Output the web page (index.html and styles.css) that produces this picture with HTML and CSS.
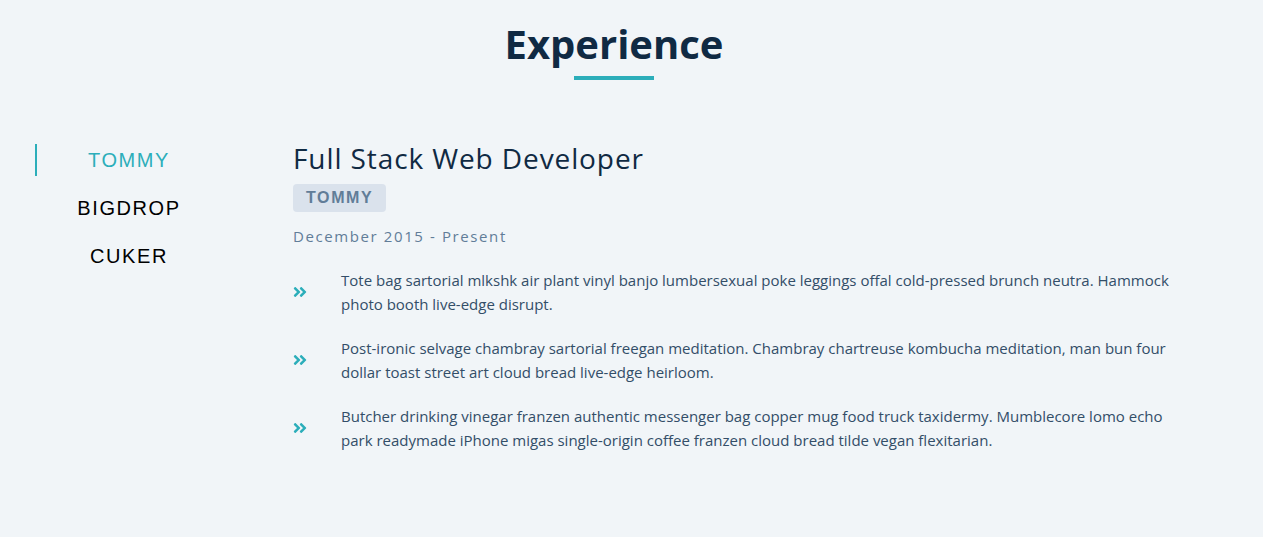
FILE: index.html
```html
<!DOCTYPE html>
<html lang="en">
<head>
<meta charset="utf-8">
<title>Experience</title>
<link rel="stylesheet" href="styles.css">
</head>
<body>
<section class="section">
  <div class="title">
    <h2>Experience</h2>
    <div class="underline"></div>
  </div>
  <div class="jobs-center">
    <div class="btn-container">
      <button class="job-btn active-btn">Tommy</button>
      <button class="job-btn">Bigdrop</button>
      <button class="job-btn">Cuker</button>
    </div>
    <article class="job-info">
      <h3>Full Stack Web Developer</h3>
      <h4>Tommy</h4>
      <p class="job-date">December 2015 - Present</p>
      <div class="job-desc">
        <svg class="job-icon" viewBox="0 0 448 512" aria-hidden="true"><path d="M224.3 273l-136 136c-9.4 9.4-24.6 9.4-33.9 0l-22.6-22.6c-9.4-9.4-9.4-24.6 0-33.9l96.4-96.4-96.4-96.4c-9.4-9.4-9.4-24.6 0-33.9L54.3 103c9.4-9.4 24.6-9.4 33.9 0l136 136c9.5 9.4 9.5 24.6.1 34zm192-34l-136-136c-9.4-9.4-24.6-9.4-33.9 0l-22.6 22.6c-9.4 9.4-9.4 24.6 0 33.9l96.4 96.4-96.4 96.4c-9.4 9.4-9.4 24.6 0 33.9l22.6 22.6c9.4 9.4 24.6 9.4 33.9 0l136-136c9.4-9.2 9.4-24.4 0-33.8z"/></svg>
        <p>Tote bag sartorial mlkshk air plant vinyl banjo lumbersexual poke leggings offal cold-pressed brunch neutra. Hammock photo booth live-edge disrupt.</p>
      </div>
      <div class="job-desc">
        <svg class="job-icon" viewBox="0 0 448 512" aria-hidden="true"><path d="M224.3 273l-136 136c-9.4 9.4-24.6 9.4-33.9 0l-22.6-22.6c-9.4-9.4-9.4-24.6 0-33.9l96.4-96.4-96.4-96.4c-9.4-9.4-9.4-24.6 0-33.9L54.3 103c9.4-9.4 24.6-9.4 33.9 0l136 136c9.5 9.4 9.5 24.6.1 34zm192-34l-136-136c-9.4-9.4-24.6-9.4-33.9 0l-22.6 22.6c-9.4 9.4-9.4 24.6 0 33.9l96.4 96.4-96.4 96.4c-9.4 9.4-9.4 24.6 0 33.9l22.6 22.6c9.4 9.4 24.6 9.4 33.9 0l136-136c9.4-9.2 9.4-24.4 0-33.8z"/></svg>
        <p>Post-ironic selvage chambray sartorial freegan meditation. Chambray chartreuse kombucha meditation, man bun four dollar toast street art cloud bread live-edge heirloom.</p>
      </div>
      <div class="job-desc">
        <svg class="job-icon" viewBox="0 0 448 512" aria-hidden="true"><path d="M224.3 273l-136 136c-9.4 9.4-24.6 9.4-33.9 0l-22.6-22.6c-9.4-9.4-9.4-24.6 0-33.9l96.4-96.4-96.4-96.4c-9.4-9.4-9.4-24.6 0-33.9L54.3 103c9.4-9.4 24.6-9.4 33.9 0l136 136c9.5 9.4 9.5 24.6.1 34zm192-34l-136-136c-9.4-9.4-24.6-9.4-33.9 0l-22.6 22.6c-9.4 9.4-9.4 24.6 0 33.9l96.4 96.4-96.4 96.4c-9.4 9.4-9.4 24.6 0 33.9l22.6 22.6c9.4 9.4 24.6 9.4 33.9 0l136-136c9.4-9.2 9.4-24.4 0-33.8z"/></svg>
        <p>Butcher drinking vinegar franzen authentic messenger bag copper mug food truck taxidermy. Mumblecore lomo echo park readymade iPhone migas single-origin coffee franzen cloud bread tilde vegan flexitarian.</p>
      </div>
    </article>
  </div>
</section>
</body>
</html>
```

FILE: styles.css
```css
* {
  margin: 0;
  padding: 0;
  box-sizing: border-box;
}

body {
  background: #f1f5f8;
  color: #102a43;
  font-family: "Open Sans", "Noto Sans", sans-serif;
  font-size: 15px;
  line-height: 1.5;
}

.section {
  padding-top: 24px;
  margin-left: 27px;
  width: 1174px;
}

.title {
  text-align: center;
  margin-bottom: 64px;
}

.title h2 {
  font-size: 40px;
  line-height: 1;
  font-weight: 700;
  letter-spacing: 0;
  color: #102a43;
  margin-bottom: 12px;
}

.underline {
  width: 80px;
  height: 4px;
  background: #2caeba;
  margin: 0 auto;
}

.jobs-center {
  display: grid;
  grid-template-columns: 200px 1fr;
  column-gap: 66px;
}

.btn-container {
  display: flex;
  flex-direction: column;
}

.job-btn {
  background: transparent;
  border: 2px solid transparent;
  text-transform: uppercase;
  font-family: "Liberation Sans", Arial, sans-serif;
  font-size: 20px;
  letter-spacing: 1.6px;
  line-height: 1;
  padding: 4px 0;
  margin: 0 6px 16px 10px;
  color: #000;
  cursor: pointer;
}

.active-btn {
  color: #2caeba;
  box-shadow: -2px 0 #2caeba;
}

.job-info h3 {
  font-size: 28px;
  font-weight: 400;
  line-height: 1;
  letter-spacing: 0.9px;
  color: #102a43;
  margin-bottom: 12px;
}

.job-info h4 {
  display: inline-block;
  font-family: "Liberation Sans", Arial, sans-serif;
  font-size: 16px;
  font-weight: 700;
  line-height: 1;
  letter-spacing: 1.6px;
  text-transform: uppercase;
  color: #617d98;
  background: #dae2ec;
  padding: 6px 13px;
  border-radius: 4px;
  margin-bottom: 12px;
}

.job-date {
  font-size: 15px;
  line-height: 24px;
  letter-spacing: 1.6px;
  color: #617d98;
  margin-bottom: 20px;
}

.job-desc {
  display: grid;
  grid-template-columns: 16px 1fr;
  column-gap: 32px;
  align-items: center;
  margin-bottom: 20px;
}

.job-icon {
  width: 14px;
  height: 16px;
  fill: #2caeba;
}

.job-desc p {
  color: #334e68;
  line-height: 24px;
  max-width: 845px;
}
```
